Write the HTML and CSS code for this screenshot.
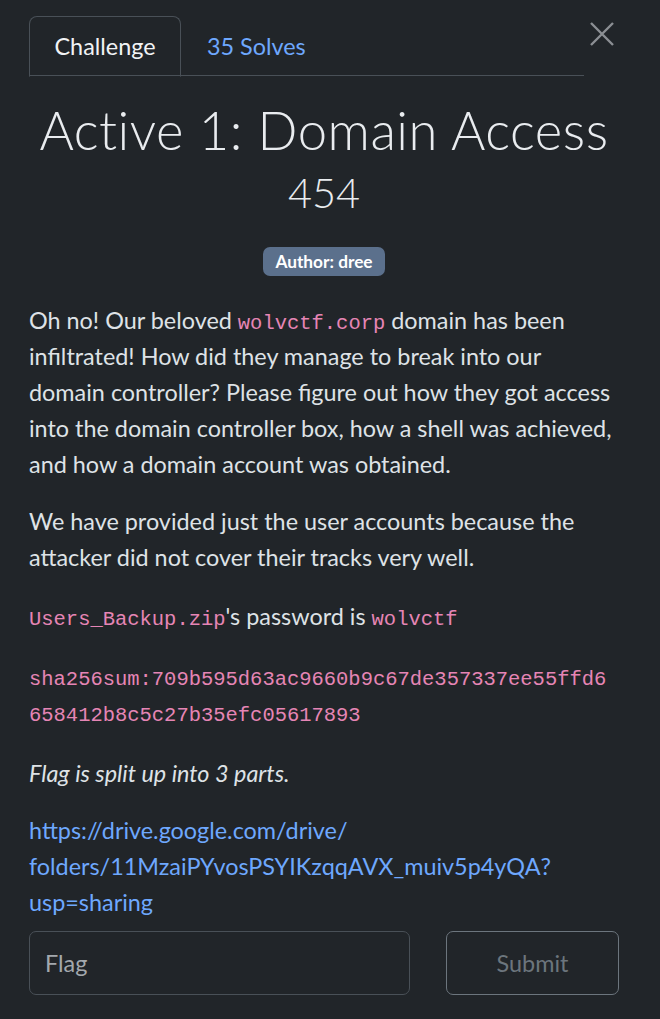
FILE: index.html
```html
<!DOCTYPE html>
<html>
<head>
<meta charset="utf-8">
<link rel="stylesheet" href="styles.css">
</head>
<body>
<div class="modal">
  <div class="head">
    <ul class="tabs">
      <li class="tab active">Challenge</li>
      <li class="tab link">35 Solves</li>
    </ul>
    <button class="close" aria-label="Close">
      <svg width="26" height="26" viewBox="0 0 26 26"><path d="M2 2L24 24M24 2L2 24" stroke="#8b8f93" stroke-width="2.4" fill="none"/></svg>
    </button>
  </div>
  <h1 class="title">Active 1: Domain Access</h1>
  <div class="value">454</div>
  <div class="badge-row"><span class="badge">Author: dree</span></div>
  <div class="desc">
    <p>Oh no! Our beloved <code>wolvctf.corp</code> domain has been infiltrated! How did they manage to break into our domain controller? Please figure out how they got access into the domain controller box, how a shell was achieved, and how a domain account was obtained.</p>
    <p class="p2">We have provided just the user accounts because the attacker did not cover their tracks very well.</p>
    <p><code>Users_Backup.zip</code>'s password is <code>wolvctf</code></p>
    <p class="hash"><code>sha256sum:709b595d63ac9660b9c67de357337ee55ffd6658412b8c5c27b35efc05617893</code></p>
    <p><em>Flag is split up into 3 parts.</em></p>
    <p class="last"><a href="#">https://drive.google.com/drive/<wbr>folders/11MzaiPYvosPSYIKzqqAVX_muiv5p4yQA?<wbr>usp=sharing</a></p>
  </div>
  <form class="flag-form">
    <input class="flag-input" type="text" placeholder="Flag">
    <button class="submit" type="button">Submit</button>
  </form>
</div>
</body>
</html>
```

FILE: styles.css
```css
html, body {
  margin: 0;
  padding: 0;
  background: #212529;
}
body {
  font-family: Lato, "Liberation Sans", sans-serif;
  color: #dee2e6;
  font-size: 23.4px;
  line-height: 36px;
}
.modal {
  width: 590px;
  padding: 16px 41px 0 29px;
}
.head {
  display: flex;
  align-items: flex-start;
}
.tabs {
  list-style: none;
  margin: 0;
  padding: 0;
  display: flex;
  width: 555px;
  border-bottom: 1px solid #495057;
  height: 60px;
  box-sizing: border-box;
}
.tab {
  padding: 0 24px;
  height: 60px;
  box-sizing: border-box;
  display: flex;
  align-items: center;
  padding-bottom: 1px;
  font-size: 23.4px;
}
.tab.active {
  width: 152px;
  justify-content: center;
  border: 1px solid #495057;
  border-bottom-color: #212529;
  border-radius: 8px 8px 0 0;
  height: 61px;
  color: #f1f3f5;
}
.tab.link {
  color: #6ea8fe;
  padding-left: 26px;
}
.close {
  background: none;
  border: 0;
  padding: 0;
  margin: 5px 0 0 5px;
  width: 26px;
  height: 26px;
  display: flex;
}
.title {
  margin: 23px 0 0;
  text-align: center;
  font-weight: 300;
  font-size: 52.6px;
  line-height: 62px;
  color: #e9ecef;
  letter-spacing: 0.5px;
}
.value {
  text-align: center;
  font-size: 41.5px;
  line-height: 48px;
  font-weight: 300;
  color: #e9ecef;
  margin-top: 7px;
}
.badge-row {
  text-align: center;
  margin-top: 31px;
  line-height: 29px;
  height: 29px;
}
.badge {
  display: inline-block;
  background: #5b708c;
  color: #fff;
  font-weight: 700;
  font-size: 17.3px;
  line-height: 29px;
  padding: 0 12px;
  border-radius: 7px;
  vertical-align: top;
}
.desc {
  margin-top: 26px;
}
.desc p {
  margin: 0 0 21px;
}
.desc p.p2 {
  margin-bottom: 23px;
}
.desc p.hash {
  margin: 24px 0 25px;
  max-width: 585px;
}
.desc p.last {
  margin-bottom: 11px;
}
code {
  font-family: "Liberation Mono", monospace;
  font-size: 0.875em;
  line-height: 1;
  color: #e685b5;
  word-break: break-all;
}
a {
  color: #6ea8fe;
  text-decoration: none;
  overflow-wrap: break-word;
}
em {
  font-style: italic;
}
.flag-form {
  display: flex;
  gap: 36px;
  width: 590px;
  margin: 0;
}
.flag-input {
  width: 381px;
  height: 64px;
  box-sizing: border-box;
  background: #212529;
  border: 1px solid #495057;
  border-radius: 7px;
  color: #dee2e6;
  font-family: Lato, "Liberation Sans", sans-serif;
  font-size: 23.4px;
  padding: 0 15px;
  outline: none;
}
.flag-input::placeholder {
  color: #a3a8ad;
}
.submit {
  width: 173px;
  height: 64px;
  background: transparent;
  border: 1px solid #6c757d;
  border-radius: 7px;
  color: #6c757d;
  font-family: Lato, "Liberation Sans", sans-serif;
  font-size: 23.4px;
}
```
